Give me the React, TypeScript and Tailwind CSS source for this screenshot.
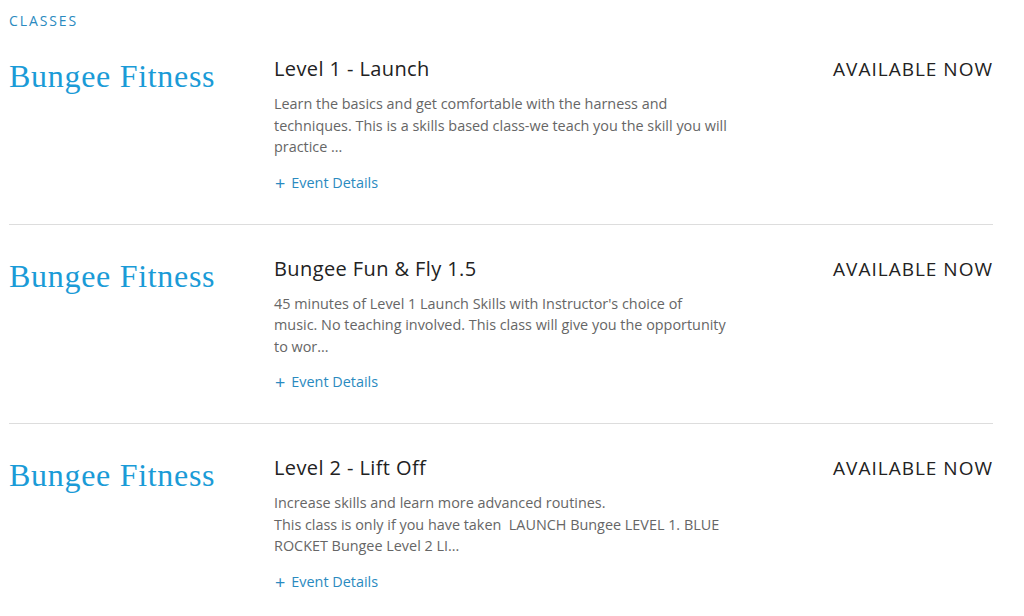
const classes = [
  {
    title: "Level 1 - Launch",
    desc: [
      "Learn the basics and get comfortable with the harness and techniques. This is a skills based class-we teach you the skill you will practice ...",
    ],
  },
  {
    title: "Bungee Fun & Fly 1.5",
    desc: [
      "45 minutes of Level 1 Launch Skills with Instructor's choice of music. No teaching involved. This class will give you the opportunity to wor...",
    ],
  },
  {
    title: "Level 2 - Lift Off",
    desc: [
      "Increase skills and learn more advanced routines.",
      "This class is only if you have taken\u00a0 LAUNCH Bungee LEVEL 1. BLUE ROCKET Bungee Level 2 LI...",
    ],
  },
];

export default function App() {
  return (
    <div className="min-h-screen bg-white font-['Open_Sans',sans-serif]">
      <div className="w-[984px] ml-[9px]">
        <div className="pt-[12px] text-[14px] leading-[18px] tracking-[1.9px] text-[#2a8ac0]">CLASSES</div>
        {classes.map((c, i) => (
          <div
            key={c.title}
            className={
              "grid grid-cols-[265px_454px_1fr] pb-[31px] " +
              (i === 0 ? "pt-[25px] " : "pt-[30px] ") +
              (i < classes.length - 1 ? "border-b border-[#dddddd]" : "")
            }
          >
            <div className="pt-[1px] font-['Liberation_Serif',serif] text-[32px] leading-[40px] tracking-[0.7px] text-[#1a9bd7]">
              Bungee Fitness
            </div>
            <div>
              <h3 className="text-[20px] leading-[28px] tracking-[0.4px] text-[#222222]">{c.title}</h3>
              <div className="mt-[10px] text-[14.4px] leading-[21.5px] text-[#666666]">
                {c.desc.map((d) => (
                  <p key={d}>{d}</p>
                ))}
              </div>
              <a href="#" className="mt-[15px] flex items-center gap-[6px] text-[14.4px] leading-[20px] text-[#2a8ac0]">
                <span className="pl-[1px] text-[18px] leading-[20px]">+</span>
                Event Details
              </a>
            </div>
            <div className="text-right text-[19px] leading-[28px] tracking-[1px] text-[#222222]">AVAILABLE NOW</div>
          </div>
        ))}
      </div>
    </div>
  );
}
